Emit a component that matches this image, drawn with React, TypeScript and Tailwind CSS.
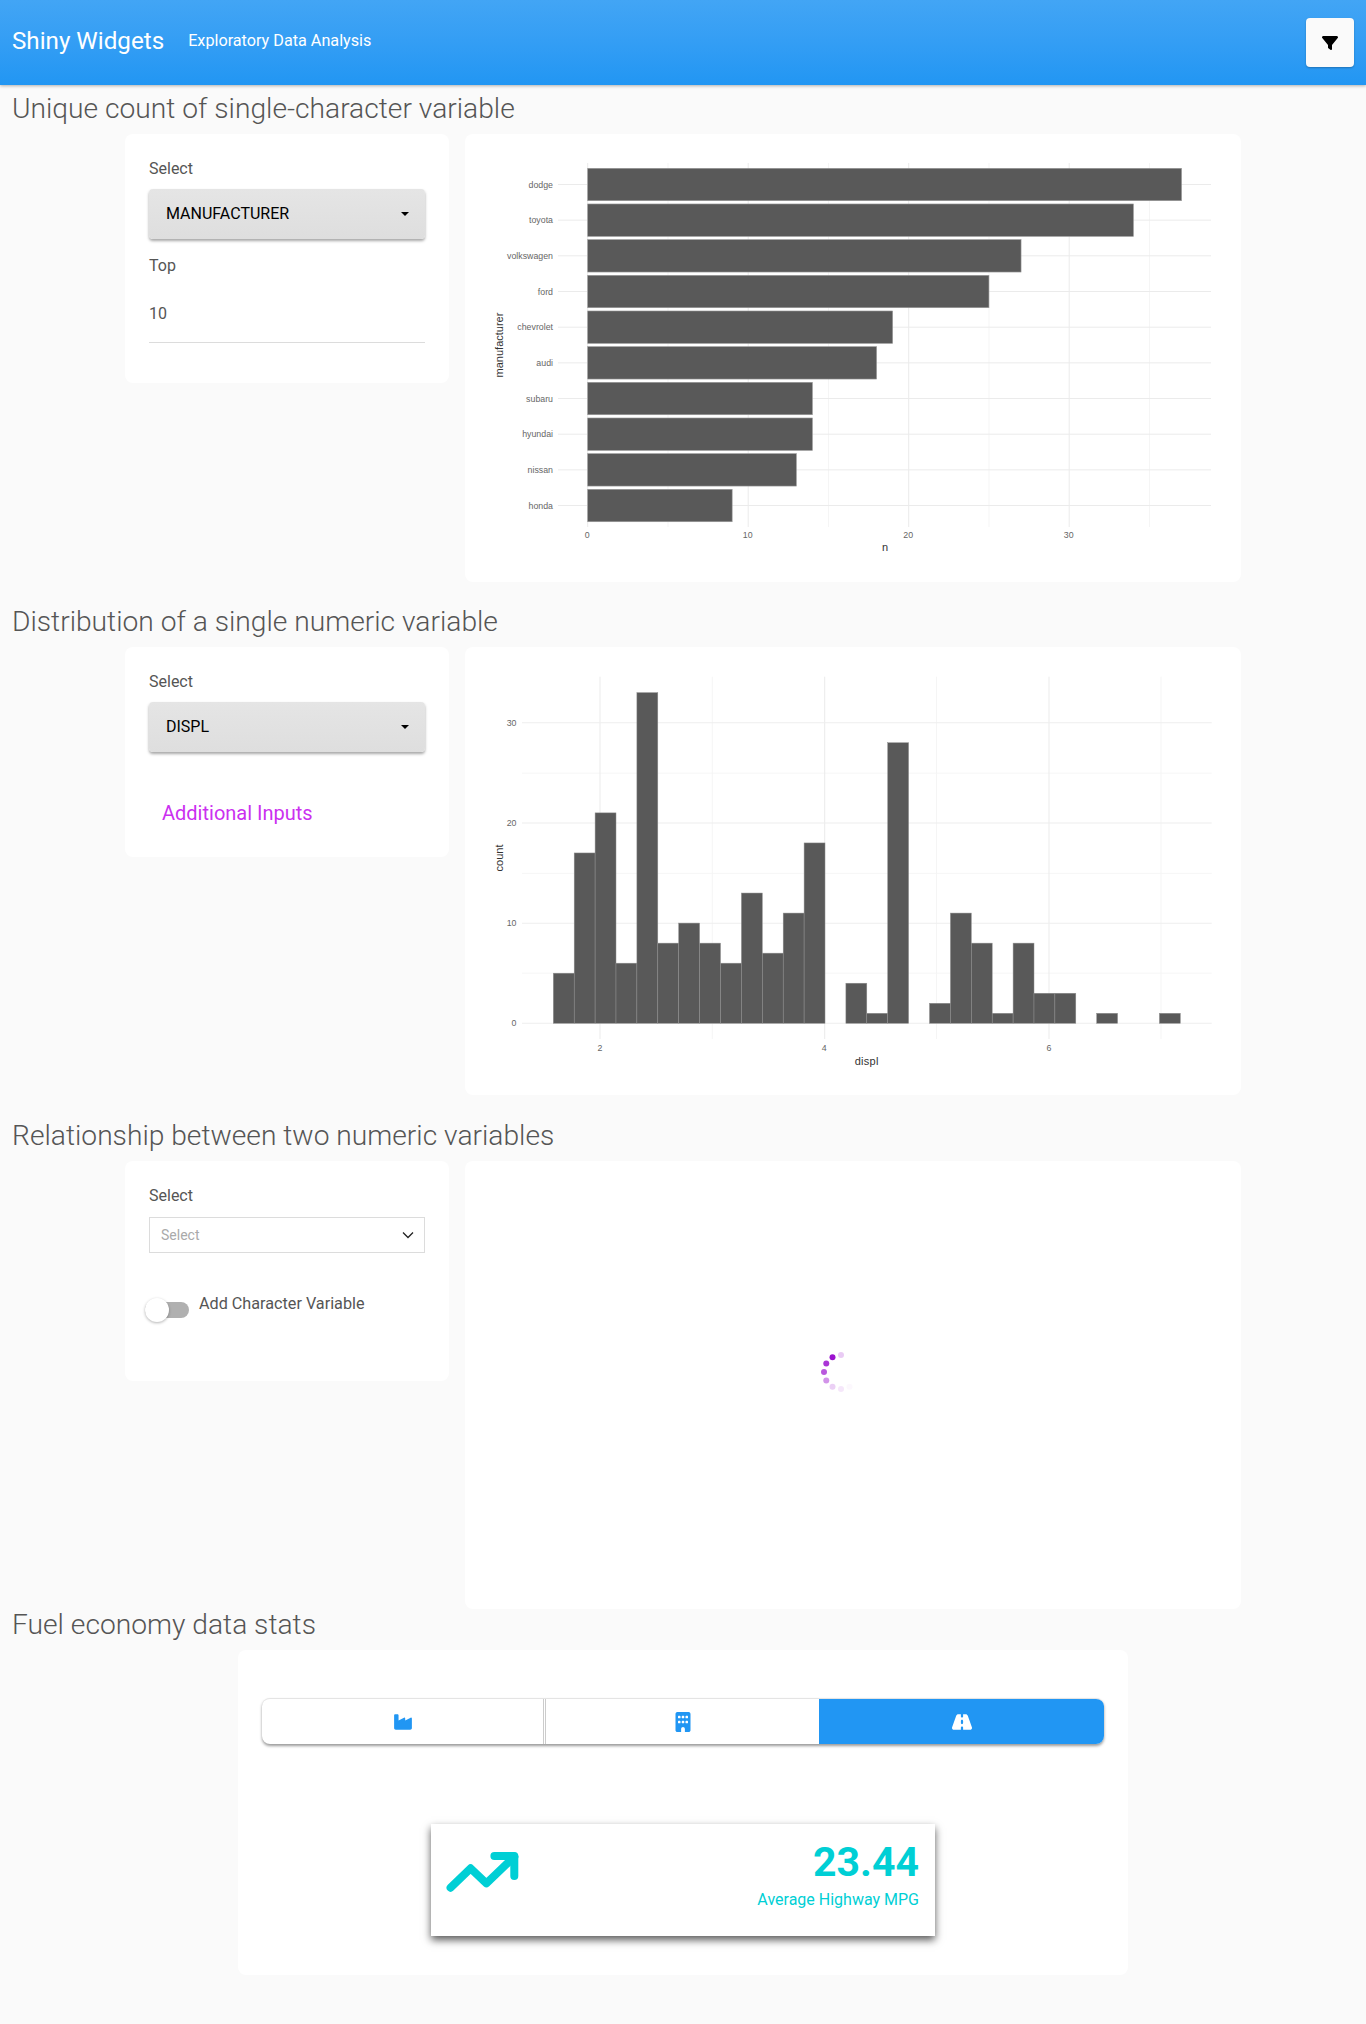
import React from "react";
import { FaFilter, FaIndustry, FaBuilding, FaRoad } from "react-icons/fa6";

const cars: [string, number][] = [
  ["dodge", 37], ["toyota", 34], ["volkswagen", 27], ["ford", 25], ["chevrolet", 19],
  ["audi", 18], ["subaru", 14], ["hyundai", 14], ["nissan", 13], ["honda", 9],
];
const bins = [5,17,21,6,33,8,10,8,6,13,7,11,18,0,4,1,28,0,2,11,8,1,8,3,3,0,1,0,0,1];

const tick = { fontFamily: '"Liberation Sans", Arial, sans-serif', fontSize: 8.8, fill: "#666" };
const title = { fontFamily: '"Liberation Sans", Arial, sans-serif', fontSize: 11, fill: "#333" };

function BarChart() {
  const x0 = 587.7, u = 16.05, y0 = 168.3, pitch = 35.67;
  return (
    <svg width={776} height={448} viewBox="465 134 776 448" className="block">
      {[668, 828.5, 989, 1149.5].map((x) => <line key={x} x1={x} x2={x} y1={163} y2={527} stroke="#f2f2f2" strokeWidth={0.8} />)}
      {[587.7, 748.2, 908.7, 1069.2].map((x) => <line key={x} x1={x} x2={x} y1={163} y2={527} stroke="#ebebeb" strokeWidth={1} />)}
      {cars.map(([n], i) => {
        const y = y0 + pitch * i + 16.2;
        return <line key={n} x1={558} x2={1211} y1={y} y2={y} stroke="#ebebeb" strokeWidth={1} />;
      })}
      {cars.map(([n, v], i) => (
        <rect key={n} x={x0} y={y0 + pitch * i} width={v * u} height={32.4} fill="#595959" stroke="#9a9a9a" strokeWidth={0.6} />
      ))}
      {cars.map(([n], i) => (
        <text key={n} x={553} y={y0 + pitch * i + 19.3} textAnchor="end" style={tick}>{n}</text>
      ))}
      {[0, 10, 20, 30].map((v) => (
        <text key={v} x={x0 + v * u - 0.5} y={538} textAnchor="middle" style={tick}>{v}</text>
      ))}
      <text x={885} y={551} textAnchor="middle" style={title}>n</text>
      <text transform="translate(502.5 345) rotate(-90)" textAnchor="middle" style={title}>manufacturer</text>
    </svg>
  );
}

function Histogram() {
  const x0 = 553.3, w = 20.9, base = 1023.3, u = 10.02;
  return (
    <svg width={776} height={448} viewBox="465 647 776 448" className="block">
      {[712.3, 936.5, 1161].map((x) => <line key={x} x1={x} x2={x} y1={676.7} y2={1039} stroke="#f2f2f2" strokeWidth={0.8} />)}
      {[773.2, 873.4, 973.2].map((y) => <line key={y} x1={522} x2={1211.7} y1={y} y2={y} stroke="#f4f4f4" strokeWidth={0.8} />)}
      {[600, 824.7, 1049].map((x) => <line key={x} x1={x} x2={x} y1={676.7} y2={1039} stroke="#ebebeb" strokeWidth={1} />)}
      {[722.7, 823, 923.2, 1023.3].map((y) => <line key={y} x1={522} x2={1211.7} y1={y} y2={y} stroke="#eeeeee" strokeWidth={1.1} />)}
      {bins.map((v, i) =>
        v > 0 ? (
          <rect key={i} x={x0 + i * w} y={base - v * u} width={w} height={v * u} fill="#595959" stroke="#8f8f8f" strokeWidth={0.5} />
        ) : null
      )}
      {[["30", 722.7], ["20", 823], ["10", 923.2], ["0", 1023.3]].map(([t, y]) => (
        <text key={t} x={516.5} y={(y as number) + 3} textAnchor="end" style={tick}>{t}</text>
      ))}
      {[["2", 600], ["4", 824.3], ["6", 1049]].map(([t, x]) => (
        <text key={t} x={x as number} y={1051} textAnchor="middle" style={tick}>{t}</text>
      ))}
      <text x={866.7} y={1064.5} textAnchor="middle" style={{ ...title, letterSpacing: 0.3 }}>displ</text>
      <text transform="translate(502.5 858) rotate(-90)" textAnchor="middle" style={title}>count</text>
    </svg>
  );
}

function Spinner() {
  const dots: [number, number][] = [
    [90, 0.22], [120, 1], [150, 0.85], [180, 0.7], [210, 0.45], [240, 0.2], [270, 0.1], [300, 0.03],
  ];
  return (
    <svg width={48} height={48} viewBox="-24 -24 48 48" className="mr-[25px] mb-[26px]">
      {dots.map(([a, o]) => {
        const r = (a * Math.PI) / 180;
        return <circle key={a} cx={Math.cos(r) * 17} cy={-Math.sin(r) * 17} r={3} fill="#9b12cf" opacity={o} />;
      })}
    </svg>
  );
}

function Heading({ children, top }: { children: React.ReactNode; top: string }) {
  return (
    <h2 className={`${top} mb-[5px] h-[40px] pl-3 text-[28.2px] leading-[40px] font-light text-[#555]`}>{children}</h2>
  );
}

function Label({ children }: { children: React.ReactNode }) {
  return <div className="h-[22px] text-base leading-[22px] text-[#555]">{children}</div>;
}

function Dropdown({ text }: { text: string }) {
  return (
    <div className="mt-[9px] flex h-[50px] items-center justify-between rounded bg-gradient-to-b from-[#e5e5e5] to-[#dedede] pr-[16px] pl-[17px] text-base text-black shadow-[0_2px_3px_rgba(0,0,0,0.35)]">
      <span>{text}</span>
      <span className="h-0 w-0 border-x-[4px] border-t-[4px] border-x-transparent border-t-black" />
    </div>
  );
}

function Row({ cardClass, left, right }: { cardClass: string; left: React.ReactNode; right: React.ReactNode }) {
  return (
    <div className="ml-[125px] flex items-start gap-4">
      <div className={`w-[324px] rounded-lg bg-white px-6 pt-6 ${cardClass}`}>{left}</div>
      <div className="flex h-[448px] w-[776px] items-center justify-center rounded-lg bg-white">{right}</div>
    </div>
  );
}

export default function App() {
  return (
    <div className="min-h-[2024px] bg-[#fafafa] font-['Roboto',sans-serif]">
      <header className="relative flex h-[85px] items-center justify-between bg-gradient-to-b from-[#42a5f5] to-[#2196f3] pr-3 pl-3 text-white shadow-[0_1px_3px_rgba(0,0,0,0.3)]">
        <div className="-mt-[2px] flex items-center">
          <span className="text-[24.2px]">Shiny Widgets</span>
          <span className="ml-[24px] text-[16.2px]">Exploratory Data Analysis</span>
        </div>
        <button className="flex h-[49px] w-[48px] items-center justify-center rounded bg-[#fafafa] text-black shadow-[0_1px_2px_rgba(0,0,0,0.25)]">
          <FaFilter size={16} />
        </button>
      </header>

      <Heading top="mt-[4px]">Unique count of single-character variable</Heading>
      <Row
        cardClass="h-[249px]"
        left={
          <>
            <Label>Select</Label>
            <Dropdown text="MANUFACTURER" />
            <div className="mt-4"><Label>Top</Label></div>
            <div className="flex h-[66px] items-center border-b border-[#dcdcdc] pt-2 text-base text-[#555]">10</div>
          </>
        }
        right={<BarChart />}
      />

      <Heading top="mt-[20px]">Distribution of a single numeric variable</Heading>
      <Row
        cardClass="h-[210px]"
        left={
          <>
            <Label>Select</Label>
            <Dropdown text="DISPL" />
            <div className="mt-[48px] ml-[13px] text-xl leading-[26px] text-[#cb30f0]">Additional Inputs</div>
          </>
        }
        right={<Histogram />}
      />

      <Heading top="mt-[21px]">Relationship between two numeric variables</Heading>
      <Row
        cardClass="h-[220px]"
        left={
          <>
            <Label>Select</Label>
            <div className="mt-[10px] flex h-[36px] items-center justify-between border border-[#dcdcdc] pr-[10px] pl-[11px] text-sm text-[#aaa]">
              <span>Select</span>
              <svg width="12" height="8" viewBox="0 0 12 8" fill="none" stroke="#222" strokeWidth="1.3"><path d="M1 1.5 6 6.5 11 1.5" /></svg>
            </div>
            <div className="mt-[39px] flex items-start">
              <div className="relative mt-[10px] -ml-[4px] h-[16px] w-[44px] shrink-0 rounded-full bg-[#b0b0b0]">
                <div className="absolute top-[-4px] left-0 h-[24px] w-[24px] rounded-full bg-white shadow-[0_1px_3px_rgba(0,0,0,0.3)]" />
              </div>
              <span className="ml-[10px] text-[16.2px] leading-[24px] text-[#555]">Add Character Variable</span>
            </div>
          </>
        }
        right={<Spinner />}
      />

      <Heading top="mt-[-4px]">Fuel economy data stats</Heading>
      <div className="ml-[238px] h-[325px] w-[890px] rounded-lg bg-white px-6 pt-12">
        <div className="flex h-[46px] w-[842px] overflow-hidden rounded-lg border-t border-[#e4e4e4] bg-white shadow-[0_2px_3px_rgba(0,0,0,0.4)]">
          <div className="flex w-[281px] items-center justify-center text-[#2196f3]"><FaIndustry size={20} /></div>
          <div className="w-[3px] border-x border-[#cccccc]" />
          <div className="flex w-[273px] items-center justify-center text-[#2196f3]"><FaBuilding size={20} /></div>
          <div className="flex w-[285px] items-center justify-center bg-[#2196f3] text-white"><FaRoad size={20} /></div>
        </div>
        <div className="mt-[80px] ml-[169px] flex h-[112px] w-[504px] items-start justify-between bg-white pt-[13px] pr-[16px] pl-[15px] shadow-[0_4px_8px_rgba(0,0,0,0.65)]">
          <svg width="74" height="42" viewBox="446 1851 74 42" fill="none" stroke="#00cfd5" strokeWidth="8" strokeLinecap="round" strokeLinejoin="round" className="mt-[14px]">
            <path d="M450.6 1887.7 470.6 1868.3 486.4 1883.3 514.3 1856.7" />
            <path d="M494.4 1856 514.3 1856 514.3 1876" />
          </svg>
          <div className="text-right text-[#00cfd5]">
            <div className="text-[41px] leading-[50px] font-bold">23.44</div>
            <div className="mt-[1px] text-base">Average Highway MPG</div>
          </div>
        </div>
      </div>
    </div>
  );
}
